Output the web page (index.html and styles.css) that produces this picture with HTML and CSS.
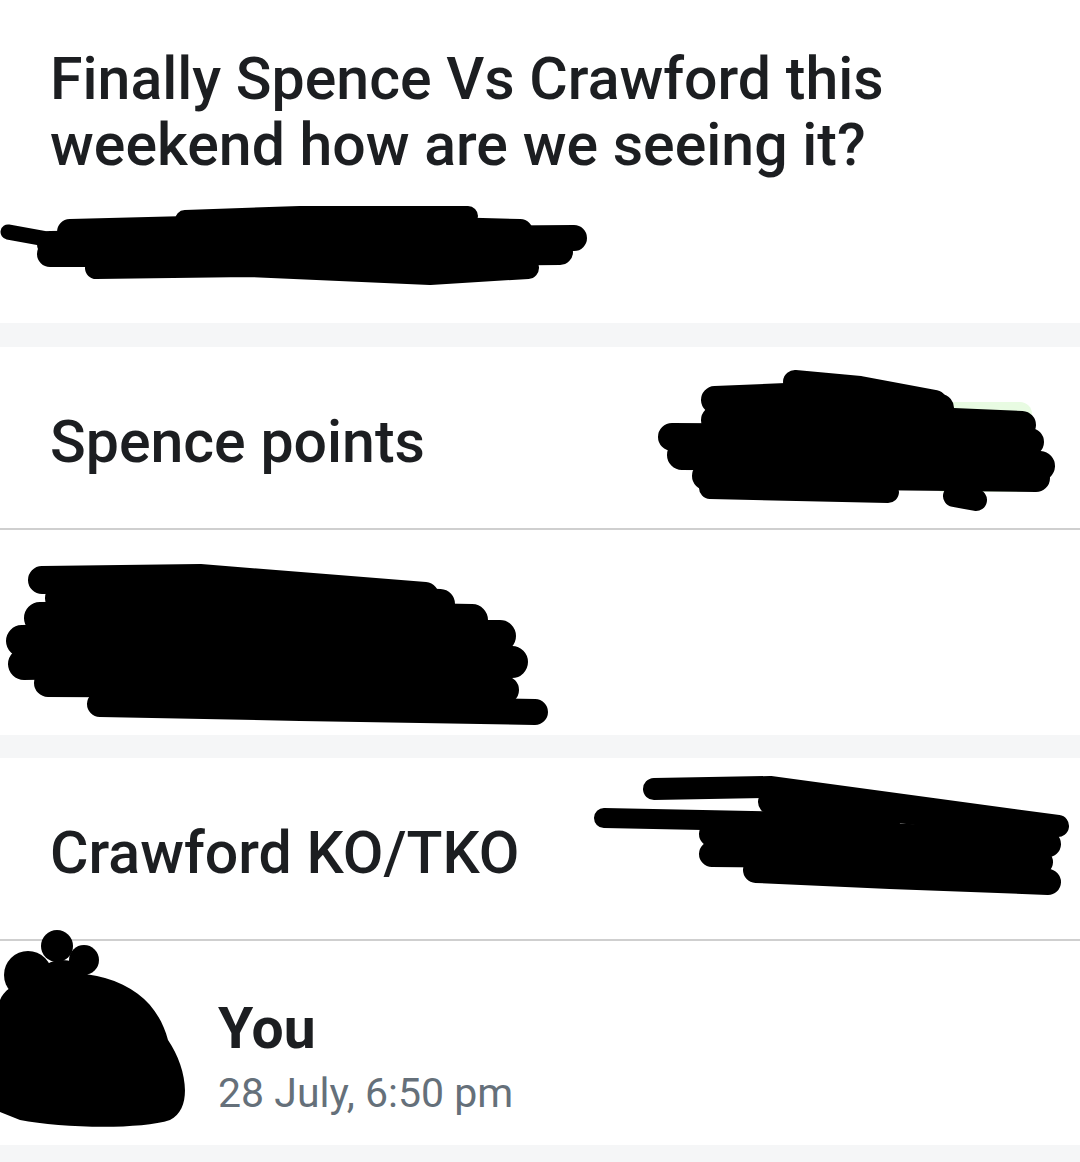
FILE: index.html
```html
<!DOCTYPE html>
<html lang="en">

<head>
	<meta charset="UTF-8">
	<meta name="viewport" content="width=device-width, initial-scale=1.0">
	<title>Poll</title>
	<link rel="stylesheet" href="styles.css">
</head>

<body>

	<!-- Poll question -->
	<div class="post-head">
		<h1 class="post-title">Finally Spence Vs Crawford this weekend how are we seeing it?</h1>
		<svg class="scribble" width="600" height="100" viewBox="0 195 600 100">
			<g stroke="#000" stroke-linecap="round" stroke-linejoin="round" fill="none">
				<path d="M8 232 L52 240" stroke-width="15"/>
				<path d="M185 220 L300 216 L468 216" stroke-width="20"/>
				<path d="M70 232 L300 226 L520 232" stroke-width="26"/>
				<path d="M50 244 L300 240 L574 238" stroke-width="26"/>
				<path d="M50 254 L300 254 L560 252" stroke-width="26"/>
				<path d="M96 268 L250 266 L430 274 L528 268" stroke-width="22"/>
			</g>
		</svg>
	</div>

	<div class="band"></div>

	<!-- Option 1 -->
	<div class="option">
		<span class="option-text">Spence points</span>
		<div class="vote-chip"></div>
		<svg class="scribble over" width="430" height="160" viewBox="640 360 430 160">
			<g stroke="#000" stroke-linecap="round" stroke-linejoin="round" fill="none">
				<path d="M785 382 L850 388 L925 402" stroke-width="24"/>
				<path d="M705 400 L800 396 L930 408" stroke-width="28"/>
				<path d="M705 420 L850 418 L1012 425" stroke-width="28"/>
				<path d="M662 437 L850 438 L1020 442" stroke-width="28"/>
				<path d="M672 455 L850 456 L1030 466" stroke-width="30"/>
				<path d="M696 476 L850 476 L1026 478" stroke-width="28"/>
				<path d="M700 488 L878 492" stroke-width="22"/>
				<path d="M944 496 L966 500" stroke-width="22"/>
			</g>
		</svg>
	</div>

	<!-- Option 2 (hidden) -->
	<div class="option option-tall">
		<svg class="scribble over" width="560" height="180" viewBox="0 555 560 180">
			<g stroke="#000" stroke-linecap="round" stroke-linejoin="round" fill="none">
				<path d="M42 580 L200 578 L425 596" stroke-width="28"/>
				<path d="M60 598 L250 596 L440 604" stroke-width="30"/>
				<path d="M40 618 L250 616 L472 620" stroke-width="32"/>
				<path d="M22 641 L250 636 L500 636" stroke-width="32"/>
				<path d="M24 664 L250 660 L512 662" stroke-width="32"/>
				<path d="M48 683 L250 684 L505 690" stroke-width="28"/>
				<path d="M100 704 L300 708 L535 712" stroke-width="26"/>
			</g>
		</svg>
	</div>

	<div class="band band-mid"></div>

	<!-- Option 3 -->
	<div class="option">
		<span class="option-text">Crawford KO/TKO</span>
		<svg class="scribble over" width="490" height="130" viewBox="600 775 490 130">
			<g stroke="#000" stroke-linecap="round" stroke-linejoin="round" fill="none">
				<path d="M664 793 L780 791 L1068 830" stroke-width="22"/>
				<path d="M780 806 L900 814 L1040 830" stroke-width="24"/>
				<path d="M614 822 L900 828" stroke-width="20"/>
				<path d="M722 838 L900 840 L1058 848" stroke-width="26"/>
				<path d="M722 858 L900 860 L1050 866" stroke-width="26"/>
				<path d="M766 874 L900 880 L1058 886" stroke-width="26"/>
			</g>
		</svg>
	</div>

	<!-- Author -->
	<div class="author">
		<div class="avatar">
			<svg width="200" height="205" viewBox="0 925 200 205">
				<g fill="#000">
					<circle cx="57" cy="946" r="16"/>
					<circle cx="84" cy="960" r="15"/>
					<circle cx="28" cy="975" r="24"/>
					<circle cx="62" cy="990" r="30"/>
					<path d="M0 1000 C10 975 70 968 105 978 C140 988 160 1010 168 1040 C186 1066 194 1108 170 1120 C140 1130 60 1128 20 1120 L0 1112 Z"/>
				</g>
			</svg>
		</div>
		<div class="author-info">
			<span class="author-name">You</span>
			<span class="author-date">28 July, 6:50 pm</span>
		</div>
	</div>

	<div class="band band-end"></div>

</body>

</html>
```

FILE: styles.css
```css
body
{
	margin: 0;
	font-family: Roboto, "Noto Sans", sans-serif;
	color: #1c1e21;
	background-color: #ffffff;
}

.post-head
{
	height: 323px;
	box-sizing: border-box;
	padding-top: 46px;
}

.post-title
{
	margin: 0;
	padding: 0 50px;
	font-size: 59px;
	font-weight: 500;
	line-height: 66px;
}

.scribble
{
	display: block;
	margin-top: 17px;
}

.band
{
	height: 24px;
	background-color: #f5f6f7;
}

.band-mid
{
	height: 23px;
}

.band-end
{
	height: 17px;
}

.option
{
	position: relative;
	height: 183px;
	box-sizing: border-box;
	padding: 9px 50px 0;
	display: flex;
	align-items: center;
	border-bottom: 2px solid #cfcfcf;
}

.option-tall
{
	height: 205px;
	border-bottom: none;
}

.option-text
{
	font-size: 59px;
	font-weight: 500;
	line-height: 66px;
}

.scribble.over
{
	position: absolute;
	margin: 0;
}

.option .scribble.over
{
	right: 0;
	top: 13px;
}

.option-tall .scribble.over
{
	left: 0;
	right: auto;
	top: 25px;
}

.option:nth-of-type(5) .scribble.over
{
	right: -10px;
	top: 17px;
}

.vote-chip
{
	position: absolute;
	right: 48px;
	top: 55px;
	width: 100px;
	height: 90px;
	border-radius: 12px;
	background-color: #e8fbe2;
}

.author
{
	height: 204px;
	display: flex;
	align-items: flex-start;
	position: relative;
}

.avatar
{
	width: 218px;
	height: 204px;
	position: relative;
}

.avatar svg
{
	position: absolute;
	left: 0;
	top: -16px;
}

.author-info
{
	display: flex;
	flex-direction: column;
	padding-top: 57px;
}

.author-name
{
	font-size: 57px;
	font-weight: 700;
	line-height: 62px;
}

.author-date
{
	font-size: 41px;
	line-height: 52px;
	margin-top: 7px;
	color: #65707a;
}
```
